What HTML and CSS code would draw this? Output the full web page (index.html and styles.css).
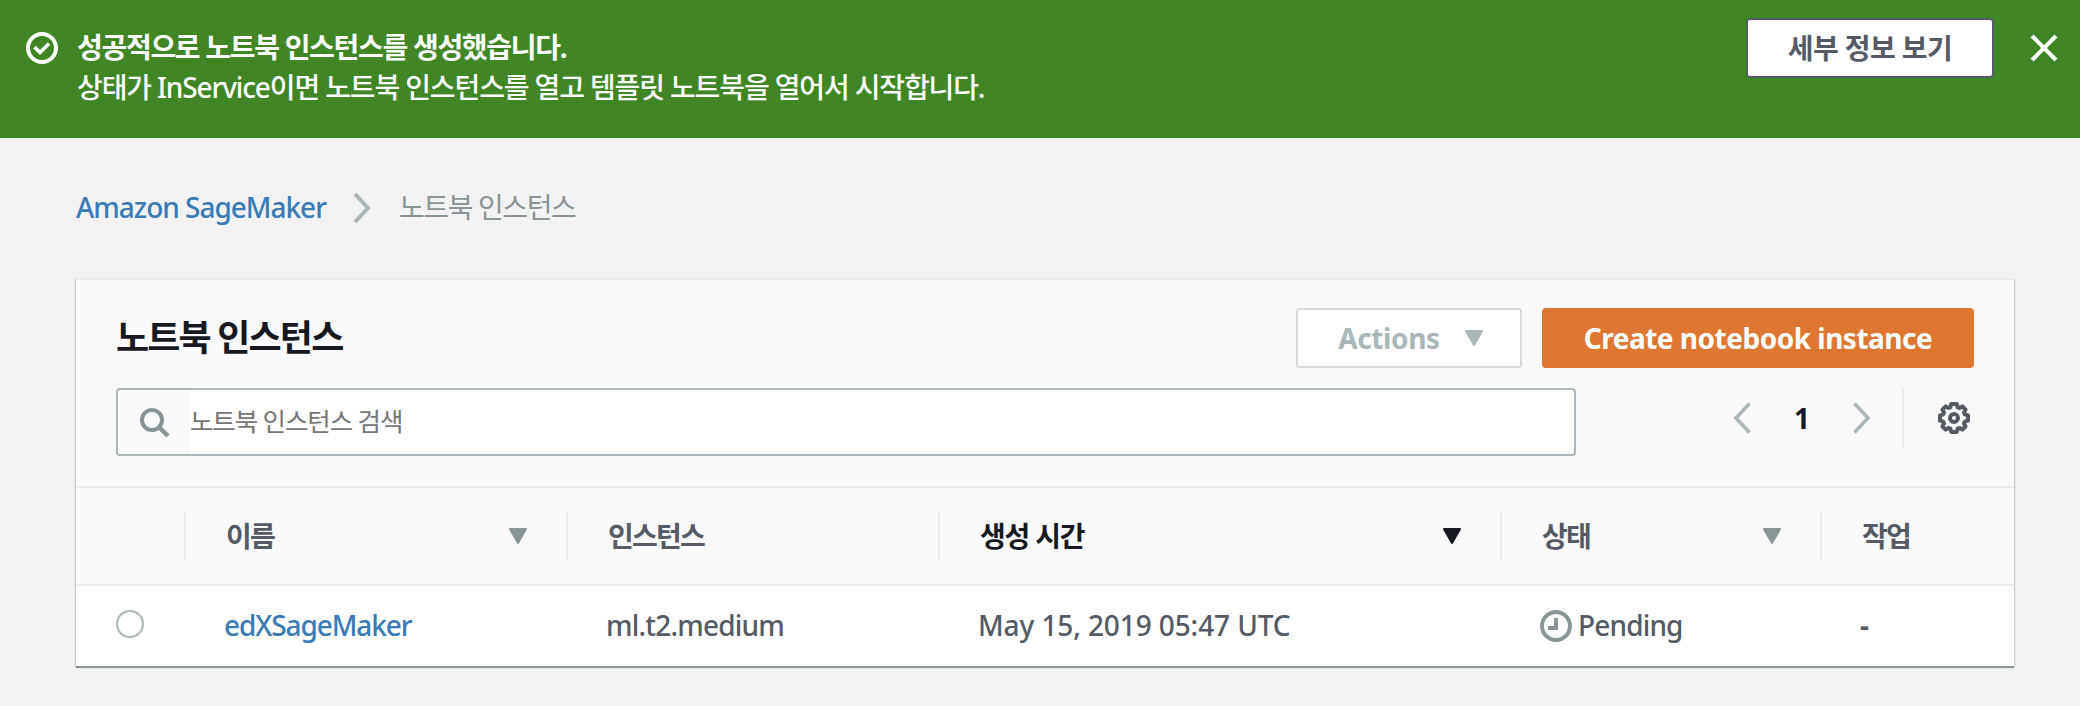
FILE: index.html
```html
<!DOCTYPE html>
<html lang="ko">
<head>
<meta charset="utf-8">
<title>Amazon SageMaker</title>
<link rel="stylesheet" href="styles.css">
</head>
<body>
<header class="flash">
  <svg class="flash-icon" viewBox="0 0 32 32"><circle cx="16" cy="16" r="14" fill="none" stroke="#fff" stroke-width="4"/><path d="M8.500 15l5.500 5.500 9-9" fill="none" stroke="#fff" stroke-width="3.600"/></svg>
  <div class="flash-text">
    <strong class="flash-title"><span class="t-title">성공적으로 노트북 인스턴스를 생성했습니다.</span></strong>
    <p class="flash-body"><span class="t-body">상태가 InService이면 노트북 인스턴스를 열고 템플릿 노트북을 열어서 시작합니다.</span></p>
  </div>
  <button class="btn btn-detail"><span class="t-detail">세부 정보 보기</span></button>
  <svg class="flash-close" viewBox="0 0 28 28"><path d="M2 2l24 24M26 2L2 26" stroke="#fff" stroke-width="4"/></svg>
</header>
<nav class="crumbs">
  <a class="link"><span class="t-amazon">Amazon SageMaker</span></a>
  <svg class="crumb-sep" viewBox="0 0 18 32"><path d="M2 2l13 14L2 30" fill="none" stroke="#aab7b8" stroke-width="4"/></svg>
  <span class="crumb-current"><span class="t-crumb">노트북 인스턴스</span></span>
</nav>
<main class="card">
  <div class="card-head">
    <h2 class="heading"><span class="t-head">노트북 인스턴스</span></h2>
    <button class="btn btn-actions"><span class="t-actions">Actions</span><svg class="caret" viewBox="0 0 20 16"><path d="M2 1h16l-8 14z" fill="#aab7b8" stroke="#aab7b8" stroke-width="2" stroke-linejoin="round"/></svg></button>
    <button class="btn btn-create"><span class="t-create">Create notebook instance</span></button>
  </div>
  <div class="tools">
    <div class="search">
      <span class="search-icon"><svg viewBox="0 0 30 30"><circle cx="12" cy="12" r="10" fill="none" stroke="#879596" stroke-width="4"/><path d="M19 19l9 9" stroke="#879596" stroke-width="4.500"/></svg></span>
      <span class="placeholder"><span class="t-place">노트북 인스턴스 검색</span></span>
    </div>
    <div class="pager">
      <svg class="page-arrow" viewBox="0 0 18 32"><path d="M16.500 1.500L3 16l13.500 14.500" fill="none" stroke="#aab7b8" stroke-width="3.600"/></svg>
      <span class="page-num">1</span>
      <svg class="page-arrow" viewBox="0 0 18 32"><path d="M1.500 1.500L15 16 1.500 30.500" fill="none" stroke="#aab7b8" stroke-width="3.600"/></svg>
      <span class="pager-rule"></span>
      <svg class="gear" viewBox="0 0 32 32"><path fill="none" stroke="#545b64" stroke-width="4" stroke-linejoin="round" d="M13.300 2h5.400l1 3.300 1.700.700 3-1.600 3.200 3.200-1.600 3 .700 1.700 3.300 1v5.400l-3.300 1-.700 1.700 1.600 3-3.200 3.200-3-1.600-1.700.700-1 3.300h-5.400l-1-3.300-1.700-.700-3 1.600-3.200-3.200 1.600-3-.700-1.700-3.300-1v-5.400l3.300-1 .700-1.700-1.600-3 3.200-3.200 3 1.600 1.700-.700z"/><circle cx="16" cy="16" r="4" fill="none" stroke="#545b64" stroke-width="4"/></svg>
    </div>
  </div>
  <div class="row row-head">
    <div class="th"></div>
    <div class="th"><span class="t-name">이름</span><svg class="caret" viewBox="0 0 20 16"><path d="M2 1h16l-8 14z" fill="#879596" stroke="#879596" stroke-width="2" stroke-linejoin="round"/></svg></div>
    <div class="th"><span class="t-inst">인스턴스</span></div>
    <div class="th th-active"><span class="t-time">생성 시간</span><svg class="caret" viewBox="0 0 20 16"><path d="M2 1h16l-8 14z" fill="#16191f" stroke="#16191f" stroke-width="2" stroke-linejoin="round"/></svg></div>
    <div class="th"><span class="t-state">상태</span><svg class="caret" viewBox="0 0 20 16"><path d="M2 1h16l-8 14z" fill="#879596" stroke="#879596" stroke-width="2" stroke-linejoin="round"/></svg></div>
    <div class="th"><span class="t-work">작업</span></div>
  </div>
  <div class="row row-body">
    <div class="td td-radio"><span class="radio"></span></div>
    <div class="td"><a class="link"><span class="t-edx">edXSageMaker</span></a></div>
    <div class="td"><span class="t-ml">ml.t2.medium</span></div>
    <div class="td"><span class="t-may">May 15, 2019 05:47 UTC</span></div>
    <div class="td td-state"><svg class="clock" viewBox="0 0 32 32"><circle cx="16" cy="16" r="14" fill="none" stroke="#879596" stroke-width="4"/><path d="M16 8v10H8" fill="none" stroke="#879596" stroke-width="4"/></svg><span class="t-pend">Pending</span></div>
    <div class="td"><span class="dash">-</span></div>
  </div>
</main>
</body>
</html>
```
FILE: styles.css
```css
* { box-sizing: border-box; }
body {
  margin: 0;
  width: 2080px;
  height: 706px;
  overflow: hidden;
  background: #f2f2f2;
  color: #545b64;
  font-family: "Noto Sans", "Noto Sans CJK KR", sans-serif;
  font-size: 28px;
  font-weight: 500;
  line-height: 40px;
}
svg { display: block; flex: none; }
span { white-space: nowrap; }
.t-title { letter-spacing: -1.3px; }
.t-body { letter-spacing: -1.13px; }
.t-detail { letter-spacing: -.6px; }
.t-amazon { letter-spacing: -1.02px; }
.t-crumb { letter-spacing: -1.4px; }
.t-head { letter-spacing: -1.85px; }
.t-actions { letter-spacing: -.4px; }
.t-create { letter-spacing: -.5px; }
.t-place { letter-spacing: -1.1px; }
.t-name, .t-state, .t-work { letter-spacing: -1.7px; }
.t-inst { letter-spacing: -1.8px; }
.t-time { letter-spacing: -1.2px; }
.t-edx { letter-spacing: -1.1px; }
.t-ml { letter-spacing: -.8px; }
.t-may { letter-spacing: -.1px; }
.t-pend { letter-spacing: -.85px; }
.dash { font-weight: 700; }
.flash {
  display: flex;
  align-items: flex-start;
  height: 138px;
  padding: 18px 22px 0 26px;
  background: #418625;
  color: #fff;
}
.flash-icon { width: 32px; height: 32px; margin-top: 14px; }
.flash-text { flex: 1; padding: 9px 0 0 19px; }
.flash-title { display: block; height: 40px; font-weight: 700; }
.flash-body { margin: 0; }
.flash-close { width: 28px; height: 28px; margin: 16px 0 0 36px; }
.btn {
  display: flex;
  align-items: center;
  justify-content: center;
  flex: none;
  height: 60px;
  padding: 0;
  border: 2px solid #545b64;
  border-radius: 4px;
  background: #fff;
  color: #545b64;
  font: inherit;
  font-weight: 700;
}
.btn-detail { width: 248px; }
.btn-actions { width: 226px; gap: 24px; padding-left: 4px; border-color: #d5dbdb; color: #aab7b8; }
.btn-create { width: 432px; margin-left: 20px; border-color: #dd7732; background: #dd7732; color: #fff; }
.caret { width: 20px; height: 16px; }
.crumbs { display: flex; align-items: center; height: 140px; padding-left: 76px; }
.link { color: #3b7ab5; }
.crumbs .link, .crumb-current { padding-bottom: 2px; }
.crumb-sep { width: 18px; height: 32px; margin: 0 28px 0 27px; }
.crumb-current { color: #879596; font-weight: 400; }
.card {
  margin: 0 66px 0 76px;
  width: 1938px;
  height: 388px;
  border-top: 2px solid #eaeded;
  background: #fafafa;
  box-shadow: 0 2px 1px rgba(0, 28, 36, .3), 1px 1px 1px rgba(0, 28, 36, .15), -1px 1px 1px rgba(0, 28, 36, .15);
}
.card-head { display: flex; align-items: center; padding: 28px 40px 0; }
.heading { flex: 1; margin: 0; color: #16191f; font-size: 36px; font-weight: 700; }
.tools { display: flex; align-items: flex-start; justify-content: space-between; height: 118px; padding: 20px 44px 0 40px; }
.search {
  display: flex;
  width: 1460px;
  height: 68px;
  border: 2px solid #aab7b8;
  border-radius: 4px;
  background: #fff;
  overflow: hidden;
}
.search-icon { width: 72px; padding: 18px 0 0 22px; background: #fafafa; }
.search-icon svg { width: 30px; height: 30px; }
.placeholder { padding-top: 11px; color: #757575; font-size: 25.500px; font-weight: 400; }
.pager { display: flex; align-items: center; height: 60px; }
.page-arrow { width: 18px; height: 32px; }
.page-num { width: 102px; text-align: center; color: #16191f; font-weight: 700; }
.pager-rule { width: 2px; height: 60px; margin: 0 34px 0 31px; background: #eaeded; }
.gear { width: 32px; height: 32px; }
.row { display: grid; grid-template-columns: 110px 382px 372px 562px 320px 192px; }
.row-head { height: 100px; padding: 24px 0; border-top: 2px solid #eaeded; border-bottom: 2px solid #eaeded; font-weight: 700; }
.th { display: flex; align-items: center; justify-content: space-between; padding: 0 38px 0 40px; border-right: 2px solid #eaeded; }
.th:last-child { border-right: 0; }
.th-active { color: #16191f; }
.row-body { height: 82px; padding-bottom: 2px; border-bottom: 2px solid #879596; background: #fff; align-items: center; }
.td { padding-left: 38px; }
.td-radio { padding: 0 0 2px 40px; }
.radio { display: block; width: 28px; height: 28px; border: 2px solid #aab7b8; border-radius: 50%; }
.td-state { display: flex; align-items: center; gap: 6px; }
.clock { width: 32px; height: 32px; margin-top: 2px; }
```
